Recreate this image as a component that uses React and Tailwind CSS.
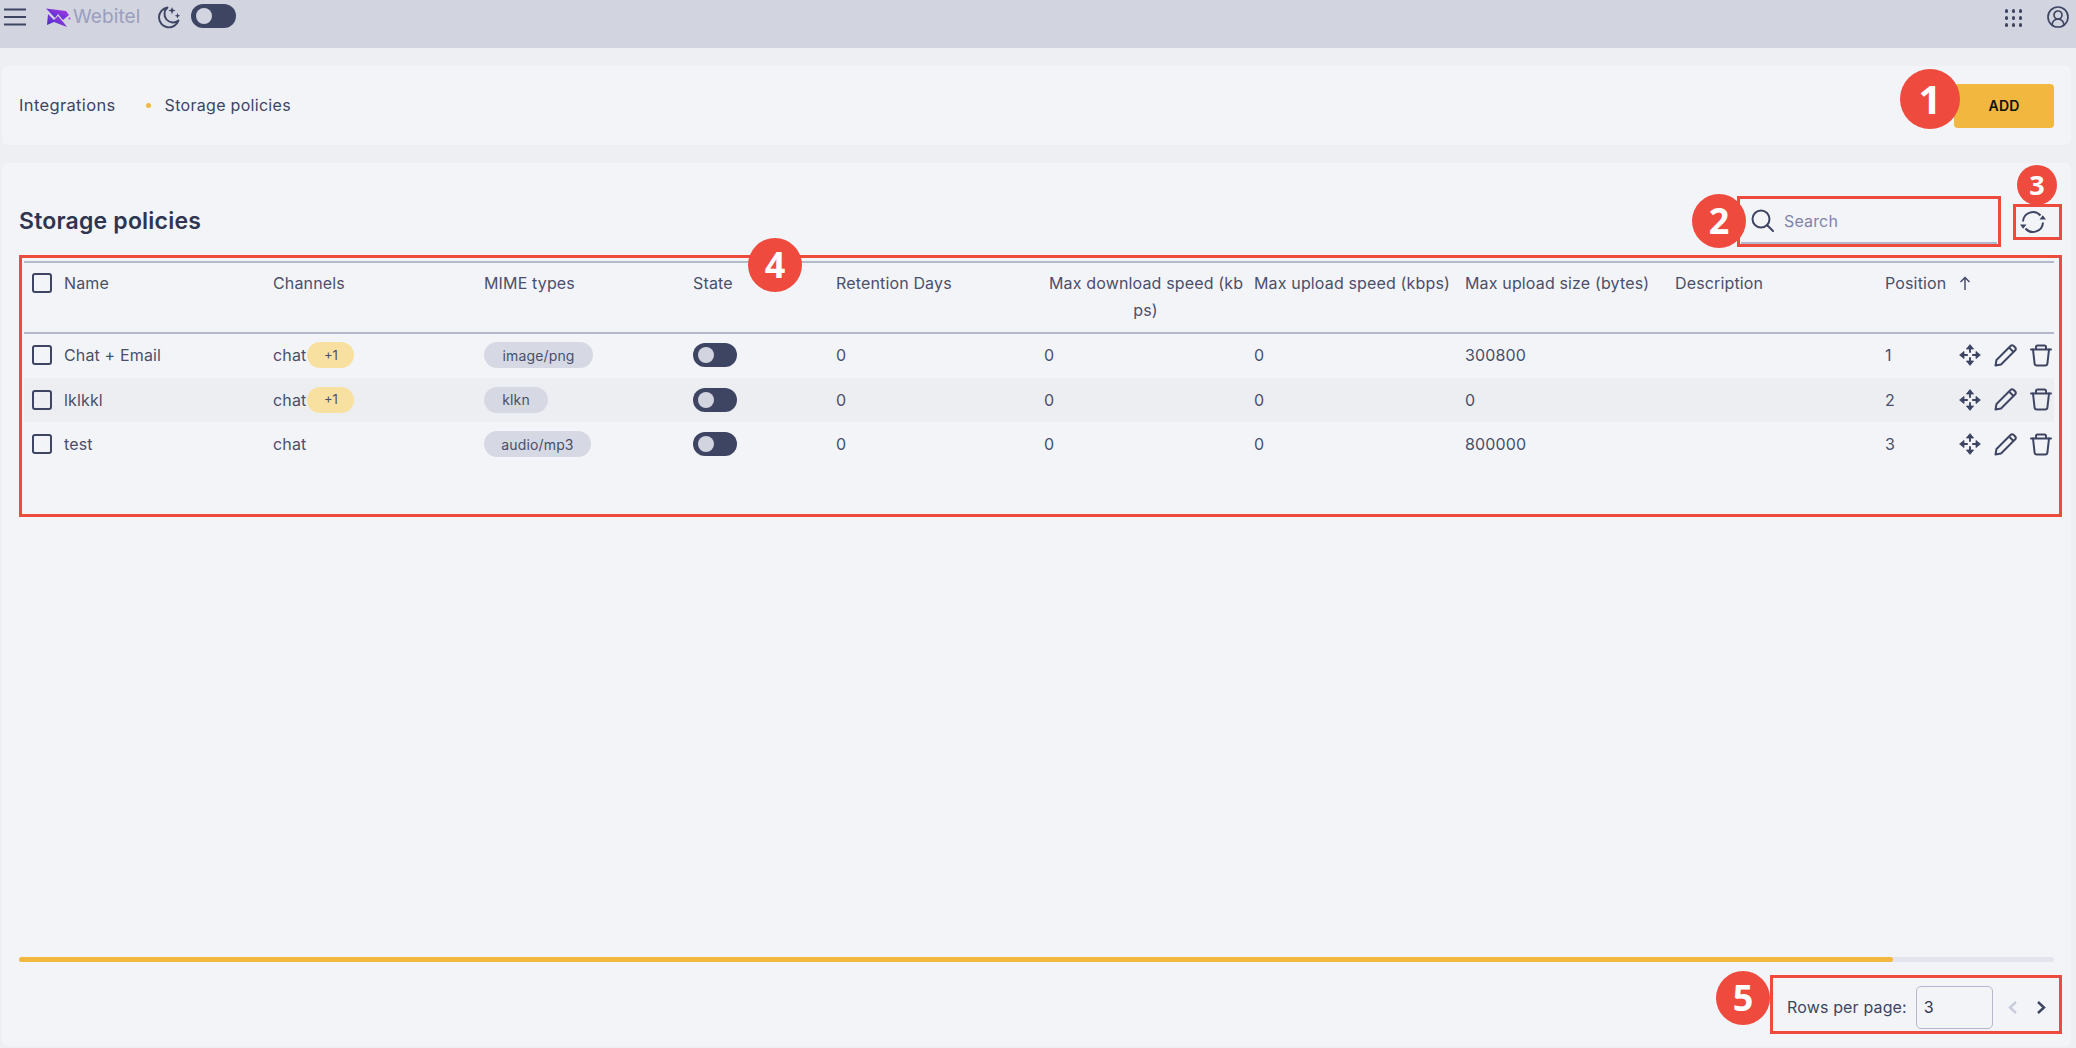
import React from 'react';
import { CircleUserRound } from 'lucide-react';

const rows = [
  { name: 'Chat + Email', extra: true, mime: 'image/png', mimeW: 'w-[109px]', size: '300800', pos: '1' },
  { name: 'lklkkl', extra: true, mime: 'klkn', mimeW: 'w-[64px]', size: '0', pos: '2', band: true },
  { name: 'test', extra: false, mime: 'audio/mp3', mimeW: 'w-[107px]', size: '800000', pos: '3' },
];

const gridCols = 'grid grid-cols-[40px_209px_211px_209px_143px_208px_210px_211px_210px_210px_74px_1fr]';

const Logo = () => (
  <svg width="25" height="19" viewBox="0 0 25 19" fill="none">
    <defs>
      <linearGradient id="wb" x1="0" y1="1" x2="1" y2="0">
        <stop offset="0" stopColor="#3d2fc4" />
        <stop offset="1" stopColor="#b23be8" />
      </linearGradient>
    </defs>
    <path d="M0 0.5 L20 3 L23 7 L17 12 L12 6 L9 10 Z" fill="url(#wb)" />
    <path d="M2 6 L8 12 L12 8 L18 15 L21 19 L8 14 L1 17 Z" fill="url(#wb)" />
    <circle cx="23.5" cy="10.5" r="1" fill="#b23be8" />
  </svg>
);

const MoonStars = () => (
  <svg width="23" height="23" viewBox="0 0 23 23" fill="none" stroke="#3e4563" strokeWidth="1.9">
    <path d="M9.5 1.5a10 10 0 1 0 11 13a8.5 8.5 0 0 1-11-13z" strokeLinejoin="round" />
    <path d="M14 1l1 2.6 2.6 1-2.6 1-1 2.6-1-2.6-2.6-1 2.6-1zM19.5 7l.8 1.9 1.9.8-1.9.8-.8 1.9-.8-1.9-1.9-.8 1.9-.8z" fill="#3e4563" stroke="none" />
  </svg>
);

const Toggle = ({ w = 'w-[44px]', h = 'h-[24px]' }) => (
  <div className={`${w} ${h} rounded-full bg-[#3e4563] flex items-center pl-[5px]`}>
    <div className="w-[16px] h-[16px] rounded-full bg-[#d2d4e0]" />
  </div>
);

const Checkbox = () => (
  <div className="w-[20px] h-[20px] rounded-[3px] border-2 border-[#3e4563]" />
);

const MoveIcon = () => (
  <svg width="22" height="22" viewBox="0 0 22 22" fill="#3e4563" stroke="#3e4563" strokeWidth="1.9">
    <path d="M11 4.5V8.8M11 13.2V17.5M4.5 11H8.8M13.2 11H17.5" fill="none" />
    <path d="M11 0.6L14.6 5H7.4ZM11 21.4L14.6 17H7.4ZM0.6 11L5 7.4V14.6ZM21.4 11L17 7.4V14.6Z" strokeWidth="0.8" strokeLinejoin="round" />
  </svg>
);

const PencilIcon = () => (
  <svg width="23" height="23" viewBox="0 0 23 23" fill="none" stroke="#3e4563" strokeWidth="2" strokeLinejoin="round">
    <path d="M1.5 21.5l1-5.5L16.5 2a2.2 2.2 0 0 1 3-.2l1.7 1.7a2.2 2.2 0 0 1-.2 3L7 20.5z" />
    <path d="M15 3.5l4.5 4.5" />
  </svg>
);

const TrashIcon = () => (
  <svg width="22" height="23" viewBox="0 0 22 23" fill="none" stroke="#3e4563" strokeWidth="2" strokeLinejoin="round" strokeLinecap="round">
    <path d="M1 5.5h20M6 5.5V3a1.6 1.6 0 0 1 1.6-1.6h6.8A1.6 1.6 0 0 1 16 3v2.5" />
    <path d="M3 5.5l1.6 14.2a2.2 2.2 0 0 0 2.2 1.9h8.4a2.2 2.2 0 0 0 2.2-1.9L19 5.5" />
  </svg>
);

const RefreshIcon = () => (
  <svg width="26" height="26" viewBox="0 0 26 26" fill="none" stroke="#3e4563" strokeWidth="2">
    <path d="M3 12.5A10 10 0 0 1 20.5 6.5" />
    <path d="M23 13.5A10 10 0 0 1 5.5 19.5" />
    <path d="M19.5 10.5h6.5l-3.2-4.2zM6.5 15.5H0l3.2 4.2z" fill="#3e4563" stroke="none" />
  </svg>
);

const Marker = ({ n, className }) => (
  <div className={`absolute z-10 rounded-full bg-[#ee4a3e] text-white font-bold flex items-center justify-center font-['Open_Sans',sans-serif] ${className}`}>
    {n}
  </div>
);

export default function App() {
  return (
    <div className="w-full h-[1048px] overflow-hidden flex flex-col bg-[#eeeff3] text-[#4a4f6a] text-[16px] tracking-[0.15px] font-['Inter',sans-serif]">
      {/* header */}
      <header className="h-12 shrink-0 bg-[#d2d4e0] flex items-start pl-1 pr-[6px]">
        <svg width="22" height="18" viewBox="0 0 22 18" className="mt-2" stroke="#3e4563" strokeWidth="2">
          <path d="M0 1.5h22M0 9h22M0 16.5h22" />
        </svg>
        <div className="ml-5 mt-2"><Logo /></div>
        <span className="ml-[2px] mt-[3px] text-[19px] leading-7 tracking-[0.1px] text-[#9a9fbd]">Webitel</span>
        <div className="ml-[18px] mt-[6px]"><MoonStars /></div>
        <div className="ml-[10px] mt-1"><Toggle w="w-[45px]" /></div>
        <div className="ml-auto mt-[9px] grid grid-cols-3 gap-[3.5px]">
          {Array.from({ length: 9 }).map((_, i) => (
            <div key={i} className="w-[3.5px] h-[3.5px] rounded-full bg-[#3e4563]" />
          ))}
        </div>
        <CircleUserRound size={24} strokeWidth={1.7} color="#3e4563" className="ml-6 mt-[5px]" />
      </header>

      {/* breadcrumbs */}
      <div className="relative h-[79px] shrink-0 mt-[18px] ml-[2px] mr-[5px] rounded-md bg-[#f3f4f8] flex items-center pl-[17px] pr-[17px] text-[#3e4563]">
        <span className="-mt-[1px] text-[16.5px] tracking-[0.35px]">Integrations</span>
        <span className="w-[5px] h-[5px] rounded-full bg-[#f2b73e] ml-[30px] mr-[14px]" />
        <span className="-mt-[1px] tracking-[0.3px]">Storage policies</span>
        <button className="ml-auto w-[100px] h-[44px] rounded-[4px] bg-[#f2b73e] text-[#111] text-[14px] font-semibold">ADD</button>
        <Marker n="1" className="w-[60px] h-[60px] text-[40px] left-[1898px] top-[3px]" />
      </div>

      {/* main card */}
      <main className="relative flex-1 mt-[18px] mb-[2px] ml-[2px] mr-[5px] rounded-md bg-[#f3f4f8] flex flex-col pt-[33px] pl-[17px] pr-[9px] pb-3">
        <div className="flex items-center h-[51px]">
          <h1 className="text-[23px] font-semibold tracking-[0.2px] text-[#2f3550]">Storage policies</h1>
          <div className="ml-auto w-[264px] h-[51px] border-[3px] border-[#ee4a3e] pt-[2px] px-[1px]">
            <div className="h-[43px] border-b-2 border-[#b4b8cc] flex items-center pl-[10px] pb-[2px]">
              <svg width="23" height="23" viewBox="0 0 23 23" fill="none" stroke="#3e4563" strokeWidth="2" strokeLinecap="round">
                <circle cx="10" cy="10" r="8.5" />
                <path d="M16.5 16.5L22 22" />
              </svg>
              <span className="ml-[10px] text-[#7f85a8]">Search</span>
            </div>
          </div>
          <div className="ml-3 self-start mt-2 w-[49px] h-[36px] border-[3px] border-[#ee4a3e] flex items-center pl-[4px]">
            <RefreshIcon />
          </div>
        </div>
        <Marker n="2" className="w-[54px] h-[54px] text-[36px] left-[1690px] top-[31px]" />
        <Marker n="3" className="w-[40px] h-[40px] text-[27px] left-[2015px] top-[2px]" />

        {/* table */}
        <div className="mt-2 h-[262px] border-[3px] border-[#ee4a3e] pl-[2px] pr-[5px] pt-[3px]">
          <div className={`${gridCols} h-[73px] -mb-px border-y-2 border-t-[#b4b8cc] border-b-[#b4b8cc] pt-[7px] leading-[27px]`}>
            <div className="pl-2 pt-[3px]"><Checkbox /></div>
            <div>Name</div>
            <div>Channels</div>
            <div>MIME types</div>
            <div>State</div>
            <div>Retention Days</div>
            <div className="text-center pl-[5px] pr-[12px] whitespace-nowrap">Max download speed (kb<br />ps)</div>
            <div className="whitespace-nowrap">Max upload speed (kbps)</div>
            <div className="whitespace-nowrap">Max upload size (bytes)</div>
            <div>Description</div>
            <div>Position</div>
            <div className="pt-[2px]">
              <svg width="12" height="15" viewBox="0 0 12 15" fill="none" stroke="#3e4563" strokeWidth="1.4" className="mt-[4px]">
                <path d="M6 14V1.5M1.5 6L6 1.5 10.5 6" />
              </svg>
            </div>
          </div>
          {rows.map((r) => (
            <div key={r.name} className={`${gridCols} h-[44.5px] items-center ${r.band ? 'bg-[#edeef2]' : ''}`}>
              <div className="pl-2"><Checkbox /></div>
              <div>{r.name}</div>
              <div className="flex items-center">
                <span>chat</span>
                {r.extra && (
                  <span className="ml-[1px] w-[47px] h-[26px] rounded-full bg-[#f8e1a0] flex items-center justify-center text-[13px] tracking-normal">+1</span>
                )}
              </div>
              <div>
                <span className={`${r.mimeW} h-[26px] rounded-full bg-[#d6d8e3] flex items-center justify-center text-[14px]`}>{r.mime}</span>
              </div>
              <div><Toggle /></div>
              <div>0</div>
              <div>0</div>
              <div>0</div>
              <div>{r.size}</div>
              <div />
              <div>{r.pos}</div>
              <div className="flex items-center gap-[13px]">
                <MoveIcon />
                <PencilIcon />
                <TrashIcon />
              </div>
            </div>
          ))}
        </div>
        <Marker n="4" className="w-[54px] h-[54px] text-[36px] left-[746px] top-[75px]" />

        {/* scrollbar */}
        <div className="mt-auto mr-[8px] h-[5px] rounded-full bg-[#e3e4ec]">
          <div className="w-[1874px] h-[5px] rounded-full bg-[#f2b73e]" />
        </div>

        {/* pagination */}
        <div className="relative mt-[13px] self-end w-[292px] h-[59px] border-[3px] border-[#ee4a3e] flex items-center pl-[14px] pt-[5px] text-[#3e4563]">
          <span className="whitespace-nowrap">Rows per page:</span>
          <div className="ml-[9px] w-[77px] h-[43px] shrink-0 rounded-[5px] border border-[#b4b8cc] flex items-center pl-[7px] text-[#2f3550]">3</div>
          <svg width="11" height="15" viewBox="0 0 11 15" fill="none" stroke="#c8cbd9" strokeWidth="2.4" className="ml-[14px] shrink-0">
            <path d="M9 2L3 7.5L9 13" />
          </svg>
          <svg width="11" height="15" viewBox="0 0 11 15" fill="none" stroke="#3e4563" strokeWidth="2.4" className="ml-[18px] shrink-0">
            <path d="M2 2L8 7.5L2 13" />
          </svg>
          <Marker n="5" className="w-[54px] h-[54px] text-[36px] -left-[57px] -top-[7px]" />
        </div>
      </main>
    </div>
  );
}
